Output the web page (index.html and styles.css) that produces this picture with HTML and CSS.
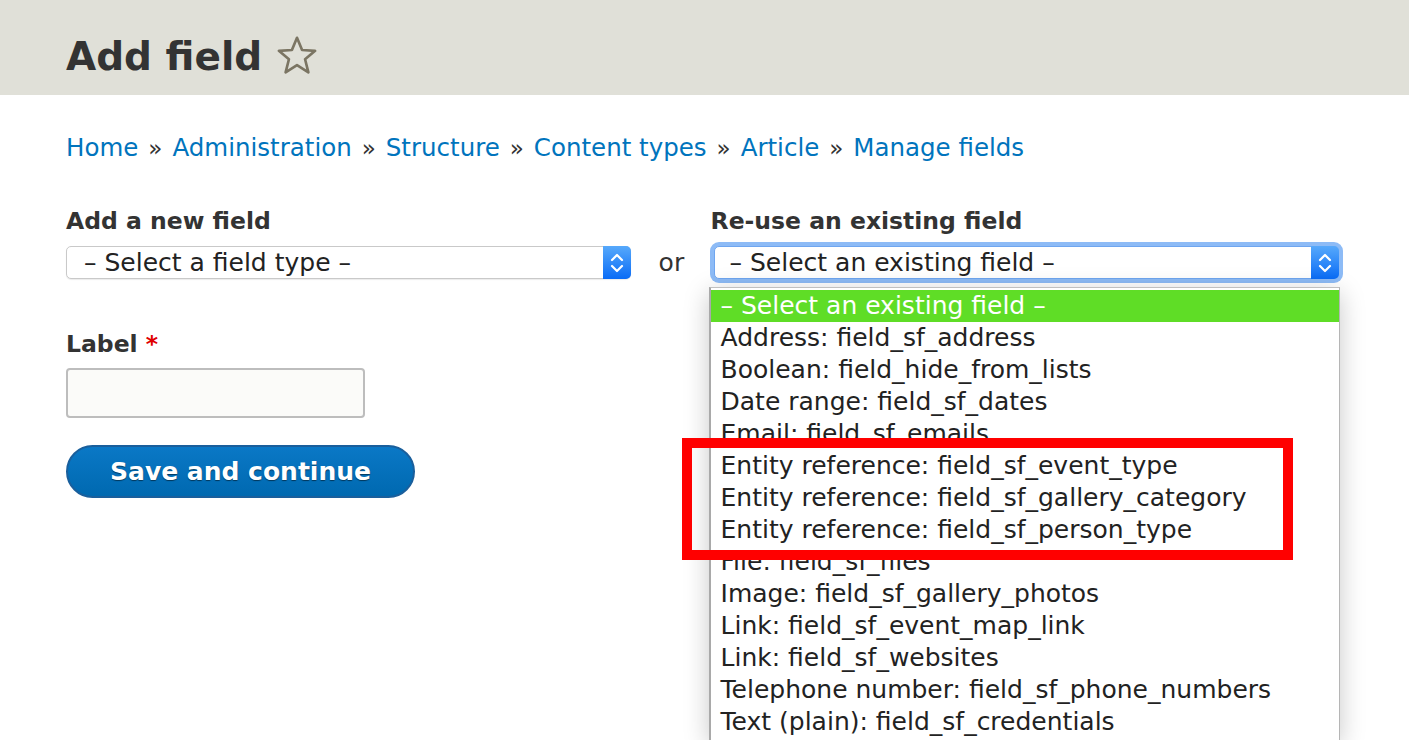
FILE: index.html
```html
<!DOCTYPE html>
<html lang="en">
<head>
<meta charset="utf-8">
<title>Add field</title>
<link rel="stylesheet" href="styles.css">
</head>
<body>
<header class="page-header">
  <h1 class="page-title">Add field</h1>
  <svg class="star" width="42" height="42" viewBox="0 0 38 38" aria-hidden="true">
    <path d="M19 2.5 L23.6 13.6 L35.4 14.3 L26.3 21.9 L29.3 33.8 L19 27.3 L8.7 33.8 L11.7 21.9 L2.6 14.3 L14.4 13.6 Z" fill="none" stroke="#7b7563" stroke-width="2.4" stroke-linejoin="round"/>
  </svg>
</header>

<main class="content">
  <nav class="breadcrumb">
    <a href="#">Home</a><span class="sep">»</span><a href="#">Administration</a><span class="sep">»</span><a href="#">Structure</a><span class="sep">»</span><a href="#">Content types</a><span class="sep">»</span><a href="#">Article</a><span class="sep">»</span><a href="#">Manage fields</a>
  </nav>

  <div class="field-row">
    <div class="col col-new">
      <div class="label">Add a new field</div>
      <div class="select">
        <span class="select-text">– Select a field type –</span>
        <span class="select-arrow"><svg width="14" height="22" viewBox="0 0 14 22"><path d="M2 8 L7 3 L12 8 M2 14 L7 19 L12 14" fill="none" stroke="#fff" stroke-width="2.2" stroke-linecap="round" stroke-linejoin="round"/></svg></span>
      </div>
    </div>
    <div class="or">or</div>
    <div class="col col-existing">
      <div class="label">Re-use an existing field</div>
      <div class="select focused">
        <span class="select-text">– Select an existing field –</span>
        <span class="select-arrow"><svg width="14" height="22" viewBox="0 0 14 22"><path d="M2 8 L7 3 L12 8 M2 14 L7 19 L12 14" fill="none" stroke="#fff" stroke-width="2.2" stroke-linecap="round" stroke-linejoin="round"/></svg></span>
      </div>
      <ul class="dropdown">
        <li class="active">– Select an existing field –</li>
        <li>Address: field_sf_address</li>
        <li>Boolean: field_hide_from_lists</li>
        <li>Date range: field_sf_dates</li>
        <li>Email: field_sf_emails</li>
        <li>Entity reference: field_sf_event_type</li>
        <li>Entity reference: field_sf_gallery_category</li>
        <li>Entity reference: field_sf_person_type</li>
        <li>File: field_sf_files</li>
        <li>Image: field_sf_gallery_photos</li>
        <li>Link: field_sf_event_map_link</li>
        <li>Link: field_sf_websites</li>
        <li>Telephone number: field_sf_phone_numbers</li>
        <li>Text (plain): field_sf_credentials</li>
      </ul>
    </div>
  </div>

  <div class="label-field">
    <div class="label">Label <span class="req">*</span></div>
    <div class="text-input"></div>
  </div>

  <button class="button-primary" type="button">Save and continue</button>
</main>

<div class="highlight-box"></div>
</body>
</html>
```
FILE: styles.css
```css
html, body {
  margin: 0;
  padding: 0;
  background: #ffffff;
  font-family: "DejaVu Sans", "Liberation Sans", sans-serif;
  color: #333333;
  overflow: hidden;
  height: 740px;
}

.page-header {
  background: #e0e0d8;
  height: 95px;
  display: flex;
  align-items: center;
  padding-left: 66px;
  padding-top: 14px;
  box-sizing: border-box;
}

.page-title {
  margin: 0;
  font-size: 39px;
  font-weight: bold;
  color: #333333;
  line-height: 1;
  padding-top: 4px;
}

.star {
  margin-left: 14px;
  margin-top: 2px;
}

.content {
  padding: 0 66px;
}

.breadcrumb {
  margin-top: 37px;
  font-size: 24.5px;
  line-height: 32px;
  white-space: nowrap;
}

.breadcrumb a {
  color: #0074bd;
  text-decoration: none;
}

.breadcrumb .sep {
  color: #333333;
  margin: 0 10px;
  font-size: 23px;
}

.field-row {
  display: flex;
  margin-top: 43px;
}

.col-new {
  width: 566px;
}

.col-existing {
  width: 634px;
  position: relative;
}

.label {
  font-size: 23.5px;
  font-weight: bold;
  line-height: 28px;
  color: #333333;
  margin-bottom: 11px;
}

.or {
  width: 26px;
  margin: 0 26px 0 28px;
  padding-top: 41px;
  font-size: 25px;
  line-height: 30px;
  color: #333333;
}

.select {
  height: 33px;
  box-sizing: border-box;
  border: 1px solid #c9c9c9;
  border-radius: 5px;
  background: #ffffff;
  display: flex;
  align-items: center;
  position: relative;
  box-shadow: 0 1px 1px rgba(0, 0, 0, 0.08);
}

.select-text {
  flex: 1;
  font-size: 25px;
  padding-left: 17px;
  color: #222222;
  white-space: nowrap;
  line-height: 31px;
}

.select-arrow {
  width: 28px;
  height: 33px;
  margin: -1px -1px -1px 0;
  border-radius: 0 5px 5px 0;
  background: linear-gradient(#57a9fb, #0a6cf6);
  display: flex;
  align-items: center;
  justify-content: center;
}

.select.focused {
  box-shadow: 0 0 0 4px #8dbbf6;
  border-color: #6fa6f0;
  margin: 0 4px 0 3px;
}

.select.focused .select-text {
  padding-left: 15px;
}

.dropdown {
  position: absolute;
  left: -2px;
  top: 80px;
  width: 631px;
  height: 453px;
  overflow: hidden;
  box-sizing: border-box;
  margin: 0;
  padding: 2px 0 0 0;
  list-style: none;
  background: #ffffff;
  border-left: 2px solid #a9a9a9;
  border-right: 1px solid #b5b5b5;
  border-top: 1px solid #c0c0c0;
  box-shadow: 0 6px 24px rgba(0, 0, 0, 0.22);
  z-index: 5;
}

.dropdown li {
  font-size: 25px;
  line-height: 32px;
  height: 32px;
  padding-left: 10px;
  color: #222222;
  white-space: nowrap;
}

.dropdown li.active {
  background: #5fdd26;
  color: #ffffff;
}

.label-field {
  margin-top: 51px;
}

.label-field .label {
  margin-bottom: 10px;
}

.req {
  color: #e00000;
}

.text-input {
  width: 299px;
  height: 50px;
  box-sizing: border-box;
  border: 2px solid #bdbdbd;
  border-radius: 4px;
  background: #fbfbf9;
}

.button-primary {
  display: block;
  margin-top: 27px;
  width: 349px;
  height: 53px;
  border-radius: 27px;
  border: 2px solid #1a5f9c;
  background: linear-gradient(#0a78c6, #0069b0);
  color: #ffffff;
  font-family: "DejaVu Sans", "Liberation Sans", sans-serif;
  font-size: 25px;
  font-weight: bold;
  text-shadow: 0 1px 1px rgba(0, 0, 0, 0.5);
  padding: 0;
  cursor: pointer;
}

.highlight-box {
  position: absolute;
  left: 682px;
  top: 438px;
  width: 611px;
  height: 122px;
  box-sizing: border-box;
  border: 10px solid #ff0000;
  z-index: 10;
}
```
